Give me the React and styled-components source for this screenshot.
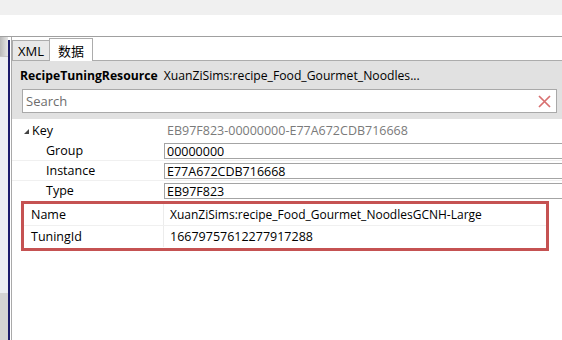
import React from 'react';
import styled, { createGlobalStyle } from 'styled-components';

const GlobalStyle = createGlobalStyle`
  body {
    margin: 0;
    font-family: "Open Sans", "Noto Sans CJK SC", sans-serif;
    font-size: 12px;
    color: #000;
    background: #fff;
  }
`;

const Window = styled.div`
  width: 562px;
  height: 340px;
  overflow: hidden;
  display: flex;
  flex-direction: column;
  background: #fff;
`;

const TopBar = styled.div`
  height: 15px;
  background: #f0f0f0;
`;

const Toolbar = styled.div`
  height: 21px;
  background: #fff;
  border-bottom: 1px solid #a0a0a0;
`;

const Body = styled.div`
  flex: 1;
  display: flex;
  min-height: 0;
`;

const LeftStrip = styled.div`
  width: 8px;
  display: flex;
  flex-direction: column;
`;

const StripCap = styled.div`
  height: 19px;
  background: linear-gradient(90deg, #b8b8b8, #e6e6e6);
  border-bottom: 1px solid #c8c8c8;
`;

const StripFill = styled.div`
  flex: 1;
  background: #eceef2;
`;

const StripFoot = styled.div`
  height: 47px;
  background: #d4d4d4;
`;

const Splitter = styled.div`
  width: 2px;
  margin-top: 3px;
  background: #1b1b6b;
  margin-right: 1px;
`;

const Panel = styled.div`
  flex: 1;
  display: flex;
  flex-direction: column;
  border-left: 1px solid #a9a9a9;
`;

const TabRow = styled.div`
  height: 23px;
  display: flex;
  align-items: flex-end;
  border-bottom: 1px solid #acacac;
`;

const Tab = styled.div`
  height: ${p => (p.$active ? 23 : 20)}px;
  padding: 0 ${p => (p.$active ? 8 : 5)}px;
  box-sizing: border-box;
  display: flex;
  align-items: center;
  font-size: 13px;
  background: ${p => (p.$active ? '#fff' : '#e8e8e8')};
  border: 1px solid #acacac;
  border-bottom: none;
  margin-left: ${p => (p.$active ? '-1px' : '0')};
  margin-bottom: ${p => (p.$active ? '-1px' : '0')};
`;

const Header = styled.div`
  background: #e1e1e1;
  padding: 0 5px 6px 10px;
`;

const Title = styled.div`
  height: 28px;
  display: flex;
  align-items: center;
  margin-left: -2px;
  font-size: 12.2px;
  white-space: nowrap;
  b {
    font-weight: 700;
    margin-right: 6px;
  }
`;

const SearchBox = styled.div`
  height: 24px;
  box-sizing: border-box;
  border: 1px solid #a9a9a9;
  background: #fff;
  display: flex;
  align-items: center;
  justify-content: space-between;
  padding: 0 5px 0 3px;
  color: #6d6d6d;
  font-size: 13px;
`;

const Grid = styled.div`
  padding-top: 1px;
`;

const Row = styled.div`
  height: ${p => p.$h || 20}px;
  display: flex;
  align-items: stretch;
  border-bottom: 1px solid ${p => (p.$line ? '#f0f0f0' : 'transparent')};
  box-sizing: border-box;
`;

const Label = styled.div`
  width: ${p => p.$w}px;
  padding-left: ${p => p.$indent}px;
  box-sizing: border-box;
  display: flex;
  align-items: center;
  gap: 3px;
  font-size: 12.5px;
  border-right: 1px solid ${p => (p.$divider ? '#ececec' : 'transparent')};
`;

const Arrow = styled.span`
  width: 0;
  height: 0;
  border-left: 5px solid transparent;
  border-bottom: 5px solid #444;
  margin-top: 2px;
`;

const Value = styled.div`
  flex: 1;
  display: flex;
  align-items: center;
  padding-left: ${p => p.$pad || 3}px;
  font-size: ${p => p.$size || 12.5}px;
  color: ${p => (p.$muted ? '#7a7a7a' : '#000')};
  white-space: nowrap;
`;

const Field = styled.div`
  flex: 1;
  margin: 2px -2px 1px 0;
  border: 1px solid #a4a4a4;
  display: flex;
  align-items: center;
  padding-left: 2px;
  font-size: 12.5px;
  white-space: nowrap;
`;

const Highlight = styled.div`
  margin: 0 0 0 9px;
  width: 528px;
  box-sizing: border-box;
  border: 3px solid #c55252;
`;

const CloseIcon = () => (
  <svg width="13" height="13" viewBox="0 0 13 13">
    <path d="M1 1 L12 12 M12 1 L1 12" stroke="#d87070" strokeWidth="1.7" />
  </svg>
);

export default function App() {
  return (
    <>
      <GlobalStyle />
      <Window>
        <TopBar />
        <Toolbar />
        <Body>
          <LeftStrip>
            <StripCap />
            <StripFill />
            <StripFoot />
          </LeftStrip>
          <Splitter />
          <Panel>
            <TabRow>
              <Tab>XML</Tab>
              <Tab $active>数据</Tab>
            </TabRow>
            <Header>
              <Title>
                <b>RecipeTuningResource</b>
                XuanZiSims:recipe_Food_Gourmet_Noodles...
              </Title>
              <SearchBox>
                Search
                <CloseIcon />
              </SearchBox>
            </Header>
            <Grid>
              <Row $h={21}>
                <Label $w={152} $indent={12}>
                  <Arrow />
                  Key
                </Label>
                <Value $muted>EB97F823-00000000-E77A672CDB716668</Value>
              </Row>
              <Row $line>
                <Label $w={152} $indent={34}>Group</Label>
                <Field>00000000</Field>
              </Row>
              <Row $line>
                <Label $w={152} $indent={34}>Instance</Label>
                <Field>E77A672CDB716668</Field>
              </Row>
              <Row>
                <Label $w={152} $indent={34}>Type</Label>
                <Field>EB97F823</Field>
              </Row>
              <Highlight>
                <Row $h={22} $line>
                  <Label $w={140} $indent={7} $divider>Name</Label>
                  <Value $pad={6} $size={12}>XuanZiSims:recipe_Food_Gourmet_NoodlesGCNH-Large</Value>
                </Row>
                <Row $h={22}>
                  <Label $w={140} $indent={7} $divider>TuningId</Label>
                  <Value $pad={6}>16679757612277917288</Value>
                </Row>
              </Highlight>
            </Grid>
          </Panel>
        </Body>
      </Window>
    </>
  );
}
